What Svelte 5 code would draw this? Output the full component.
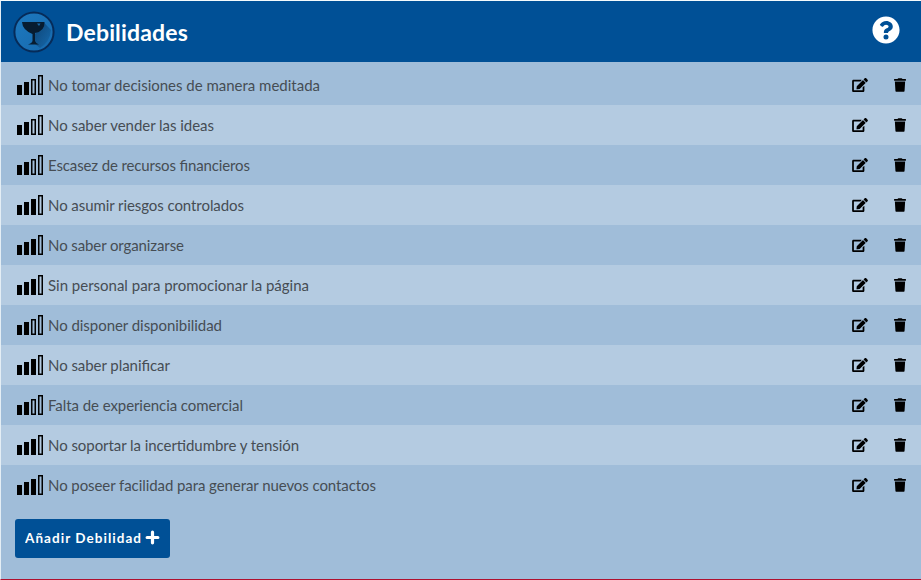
<script>
  const items = [
    { text: 'No tomar decisiones de manera meditada', level: 2, width: 272 },
    { text: 'No saber vender las ideas', level: 2, width: 166 },
    { text: 'Escasez de recursos financieros', level: 2, width: 202 },
    { text: 'No asumir riesgos controlados', level: 3, width: 196 },
    { text: 'No saber organizarse', level: 3, width: 136 },
    { text: 'Sin personal para promocionar la página', level: 3, width: 261 },
    { text: 'No disponer disponibilidad', level: 2, width: 174 },
    { text: 'No saber planificar', level: 3, width: 122 },
    { text: 'Falta de experiencia comercial', level: 2, width: 195 },
    { text: 'No soportar la incertidumbre y tensión', level: 3, width: 251 },
    { text: 'No poseer facilidad para generar nuevos contactos', level: 3, width: 328 }
  ];
  const bars = [
    { x: 0, h: 10 },
    { x: 7, h: 13 },
    { x: 14, h: 16 },
    { x: 21, h: 20 }
  ];
</script>

<main>
  <header>
    <svg class="logo" viewBox="0 0 42 42">
      <defs>
        <linearGradient id="shade" x1="0" y1="0" x2="1" y2="1">
          <stop offset="0" stop-color="#1d79bf" />
          <stop offset="1" stop-color="#1769ad" />
        </linearGradient>
        <linearGradient id="cast" x1="0" y1="0" x2="1" y2="1">
          <stop offset="0" stop-color="#08325c" />
          <stop offset="1" stop-color="#1668aa" />
        </linearGradient>
      </defs>
      <circle cx="21" cy="21" r="19.6" fill="url(#shade)" stroke="#062b59" stroke-width="2" />
      <path d="M31 11.500 38 19Q37 31 27 37L22 33 22 23Z" fill="url(#cast)" opacity=".7" />
      <path d="M9 11H31.500Q32 20 22 22V30Q22.500 32 26 33.500H15Q19 32 19.500 30V23Q9.500 19 9 11Z" fill="#071c30" />
      <path d="M24 12.500 26 15 27.500 12.500Z" fill="#1a6aa8" />
    </svg>
    <h1>Debilidades</h1>
    <svg class="help" viewBox="0 0 512 512" fill="#fff">
      <path d="M504 256c0 137-111 248-248 248S8 393 8 256 119 8 256 8s248 111 248 248zM262.700 90c-54.500 0-89.300 23-116.500 63.800-3.500 5.300-2.400 12.400 2.700 16.300l34.700 26.300c5.200 3.900 12.600 3 16.700-2.100 17.900-22.700 30.100-35.800 57.300-35.800 20.400 0 45.700 13.100 45.700 33 0 15-12.400 22.700-32.500 34C247.100 238.500 216 255 216 296v4c0 6.600 5.400 12 12 12h56c6.600 0 12-5.400 12-12v-1.300c0-28.800 84.200-30 84.200-108C380.200 132 319.300 90 262.700 90zM256 338a46 46 0 1 0 0 92 46 46 0 1 0 0-92z" />
    </svg>
  </header>

  <ul>
    {#each items as item}
      <li>
        <svg class="level" viewBox="0 0 26 20">
          {#each bars as bar, i}
            <rect
              x={bar.x + (i < item.level ? 0 : 0.75)}
              y={20 - bar.h + (i < item.level ? 0 : 0.75)}
              width={i < item.level ? 5 : 3.5}
              height={bar.h - (i < item.level ? 0 : 1.5)}
              fill={i < item.level ? '#000' : 'none'}
              stroke={i < item.level ? 'none' : '#000'}
              stroke-width="1.5"
            />
          {/each}
        </svg>
        <svg class="label" width={item.width + 4} height="24">
          <text x="0" y="18" textLength={item.width}>{item.text}</text>
        </svg>
        <svg class="edit" viewBox="0 0 576 512">
          <path d="M402.600 83.200l90.200 90.200c3.800 3.800 3.800 10 0 13.800L274.400 405.600l-92.800 10.300c-12.400 1.400-22.900-9.100-21.500-21.500l10.300-92.800L388.800 83.200c3.800-3.800 10-3.800 13.800 0zm162-22.900l-48.800-48.800c-15.200-15.200-39.900-15.200-55.200 0l-35.400 35.400c-3.800 3.800-3.800 10 0 13.800l90.200 90.200c3.800 3.800 10 3.800 13.800 0l35.400-35.400c15.200-15.300 15.200-40 0-55.200zM384 346.200V448H64V128h229.800c3.200 0 6.200-1.300 8.500-3.500l40-40c7.600-7.600 2.200-20.500-8.500-20.500H48C21.500 64 0 85.500 0 112v352c0 26.500 21.500 48 48 48h352c26.500 0 48-21.500 48-48V306.200c0-10.700-12.900-16-20.500-8.500l-40 40c-2.200 2.300-3.500 5.300-3.500 8.500z" />
        </svg>
        <svg class="trash" viewBox="0 0 448 512">
          <path d="M432 32H312l-9.400-18.700A24 24 0 0 0 281.100 0H166.800a23.700 23.700 0 0 0-21.400 13.300L136 32H16A16 16 0 0 0 0 48v32a16 16 0 0 0 16 16h416a16 16 0 0 0 16-16V48a16 16 0 0 0-16-16zM32 128l21.200 339a48 48 0 0 0 47.900 45h245.800a48 48 0 0 0 47.900-45L416 128z" />
        </svg>
      </li>
    {/each}
  </ul>

  <button>
    <svg class="caption" width="118" height="20"><text x="0" y="14" textLength="116">Añadir Debilidad</text></svg>
    <svg class="plus" viewBox="0 0 14 14"><path d="M7 2V12M2 7H12" stroke="#fff" stroke-width="3" stroke-linecap="round" /></svg>
  </button>
</main>

<style>
  :global(body) { background: #fff; }
  main {
    box-sizing: border-box;
    width: 921px;
    height: 580px;
    border-top: 1px solid #f4fbfd;
    border-left: 1px solid #e4eef5;
    border-bottom: 1px solid #b0102e;
    background: #a0bdd9;
    font-family: Lato, "Noto Sans", sans-serif;
    overflow: hidden;
  }
  header {
    box-sizing: border-box;
    height: 61px;
    padding: 0 20px 0 12px;
    display: flex;
    align-items: center;
    background: #005096;
  }
  .logo { width: 42px; height: 42px; margin-top: 1px; }
  h1 {
    margin: 0 0 0 11px;
    color: #fff;
    font: bold 23px/30px Lato, sans-serif;
    letter-spacing: 0.15px;
  }
  .help { width: 28px; height: 28px; margin: -4px 1px 0 auto; }
  ul { margin: 0; padding: 3px 0 0; list-style: none; }
  li {
    box-sizing: border-box;
    height: 40px;
    padding: 0 15px 0 16px;
    display: flex;
    align-items: center;
  }
  li:nth-child(even) { background: #b4cbe1; }
  .level { width: 26px; height: 20px; }
  .label { margin-left: 5px; fill: #464d54; font-size: 15px; overflow: visible; }
  .edit { width: 16px; height: 14px; margin-left: auto; }
  .trash { width: 12px; height: 14px; margin-left: 26px; }
  button {
    margin: 14px 0 0 14px;
    width: 155px;
    height: 39px;
    padding: 0 0 0 10px;
    border: 0;
    border-radius: 3px;
    background: #005096;
    display: flex;
    align-items: center;
    font: bold 13.500px Lato, sans-serif;
  }
  .caption { fill: #fff; }
  .plus { width: 15px; height: 15px; margin: -2px 0 0 2px; }
</style>
